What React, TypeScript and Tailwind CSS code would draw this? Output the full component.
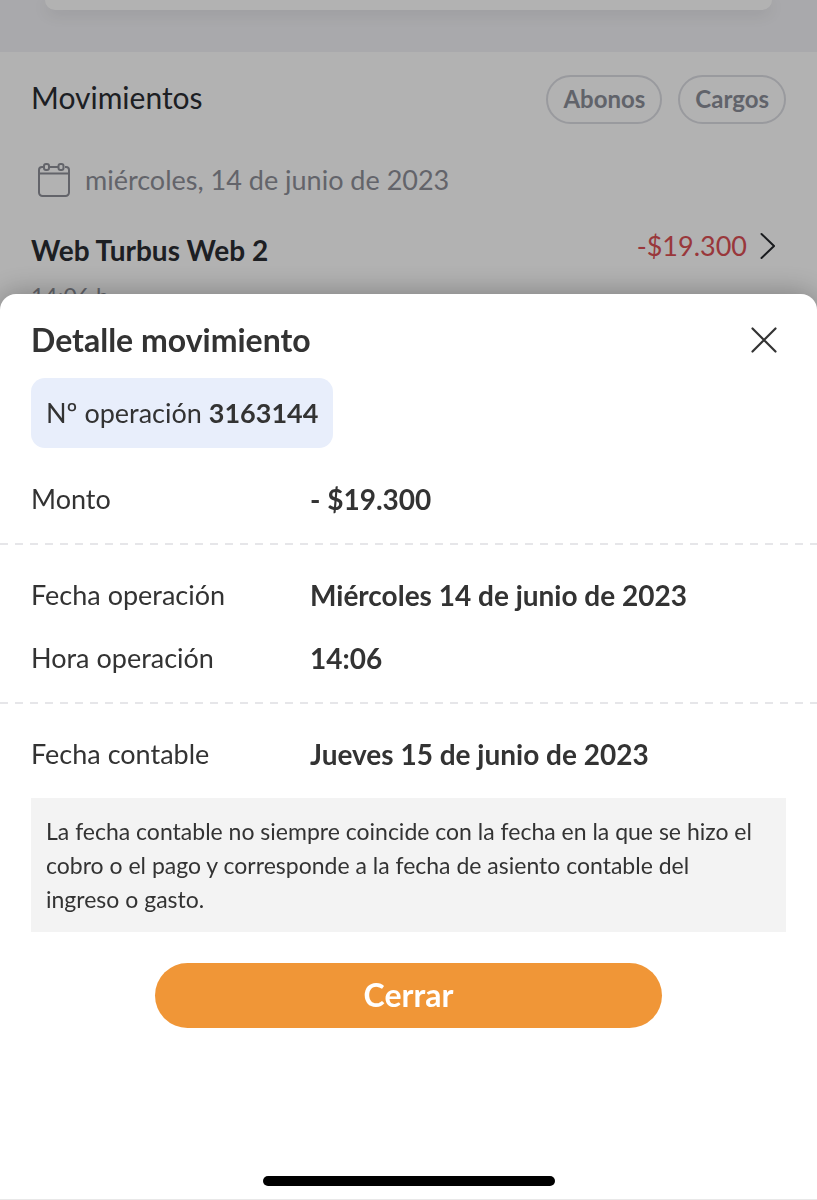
import React from 'react'

type DetailRow = { label: string; value: string }

const dateRows: DetailRow[] = [
    { label: "Fecha operación", value: "Miércoles 14 de junio de 2023" },
    { label: "Hora operación", value: "14:06" },
]

const CalendarIcon = () => (
    <svg viewBox="0 0 32 34" className="w-8 h-[34px] shrink-0" fill="none" stroke="currentColor" strokeWidth="2" aria-hidden="true">
        <path d="M5 4H4a3 3 0 0 0-3 3v22.500a3.500 3.500 0 0 0 3.500 3.500h23a3.500 3.500 0 0 0 3.500-3.500V7a3 3 0 0 0-3-3h-1M11 4h10M1 10.500h30" />
        <rect x="6" y="1" width="5" height="6" rx="2" />
        <rect x="20.500" y="1" width="5" height="6" rx="2" />
    </svg>
)

const ChevronIcon = () => (
    <svg viewBox="0 0 16 28" className="w-4 h-7 shrink-0 text-[#25272c]" fill="none" stroke="currentColor" strokeWidth="2" strokeLinecap="round" aria-hidden="true">
        <path d="M2.500 2 15 14 2.500 26" />
    </svg>
)

const CloseIcon = () => (
    <svg viewBox="0 0 26 26" className="w-[26px] h-[26px]" fill="none" stroke="currentColor" strokeWidth="2.200" strokeLinecap="round" aria-hidden="true">
        <path d="M1.500 1.500l23 23M24.500 1.500l-23 23" />
    </svg>
)

const DashedLine = () => (
    <div className="h-0.5 bg-[repeating-linear-gradient(90deg,#e6e6e9_0_8px,transparent_8px_15px)]" />
)

const Row = ({ label, value }: DetailRow) => (
    <div className="flex items-center leading-8">
        <dt className="w-[279px] shrink-0">{label}</dt>
        <dd className="text-[28px] leading-8 font-bold">{value}</dd>
    </div>
)

const Movements = () => {
    return (
        <main className="min-h-screen bg-white text-[#2a2d33]">
            <div className="h-[52px] bg-[#f2f2f6] px-[45px]">
                <div className="h-2.5 rounded-b-2xl bg-white shadow-[0_4px_16px_0_#00000018]" />
            </div>
            <div className="px-[31px] pt-[23px]">
                <div className="flex items-start justify-between">
                    <h1 className="text-[30px] leading-[44px]">Movimientos</h1>
                    <div className="flex gap-4 text-[24px] leading-8 font-bold text-[#8c8f99]">
                        <button type="button" className="h-[49px] px-[15px] pb-0.5 rounded-full border-2 border-[#dcdde3]">Abonos</button>
                        <button type="button" className="h-[49px] px-[15px] pb-0.5 rounded-full border-2 border-[#dcdde3]">Cargos</button>
                    </div>
                </div>
                <div className="flex items-center gap-[15px] mt-[39px] pl-[7px] leading-8 text-[27px] text-[#8e9099]">
                    <CalendarIcon />
                    <p>miércoles, 14 de junio de 2023</p>
                </div>
                <div className="flex items-start justify-between mt-[33px] pr-[11px] text-[27px] leading-8">
                    <div className="pt-1">
                        <p className="text-[28px] leading-8 font-bold">Web Turbus Web 2</p>
                        <p className="mt-3.5 text-[23px] leading-8 text-[#8e9099]">14:06 h</p>
                    </div>
                    <div className="flex items-center gap-3">
                        <span className="text-[#dc5055]">-$19.300</span>
                        <ChevronIcon />
                    </div>
                </div>
            </div>
        </main>
    )
}

const MovementDetail = () => {
    return (
        <div className="fixed inset-0 flex flex-col justify-end bg-black/30">
            <section role="dialog" aria-labelledby="detail-title" className="rounded-t-2xl border-b border-[#e8e8e8] bg-white text-[27px] text-[#333333] shadow-[0_0_30px_0_#00000050]">
                <header className="flex items-center justify-between pl-[31px] pr-10 pt-6">
                    <h2 id="detail-title" className="text-[32px] leading-[44px] font-bold">Detalle movimiento</h2>
                    <button type="button" aria-label="Cerrar detalle"><CloseIcon /></button>
                </header>
                <p className="w-fit mt-4 ml-[31px] px-[15px] py-[19px] leading-8 rounded-[14px] bg-[#e8eefb]">
                    Nº operación <strong>3163144</strong>
                </p>
                <dl className="px-[31px] pt-[35px] pb-7">
                    <Row label="Monto" value="- $19.300" />
                </dl>
                <DashedLine />
                <dl className="flex flex-col gap-[31px] px-[31px] pt-[34px] pb-7">
                    {dateRows.map((row) => <Row key={row.label} {...row} />)}
                </dl>
                <DashedLine />
                <div className="px-[31px] pt-[34px]">
                    <dl>
                        <Row label="Fecha contable" value="Jueves 15 de junio de 2023" />
                    </dl>
                    <p className="mt-7 pl-[15px] pr-6 py-4 text-[23px] leading-[34px] bg-[#f3f3f3]">
                        La fecha contable no siempre coincide con la fecha en la que se hizo el cobro o el pago y corresponde a la fecha de asiento contable del ingreso o gasto.
                    </p>
                </div>
                <div className="px-[155px] pt-[31px]">
                    <button type="button" className="w-full h-[65px] pb-0.5 rounded-full bg-[#f09637] text-[32px] leading-[44px] font-bold text-white">Cerrar</button>
                </div>
                <div className="mx-auto mt-[148px] mb-[13px] w-[292px] h-2.5 rounded-full bg-black" />
            </section>
        </div>
    )
}

const App = () => {
    return (
        <div className="font-['Lato',sans-serif]">
            <Movements />
            <MovementDetail />
        </div>
    )
}

export default App
